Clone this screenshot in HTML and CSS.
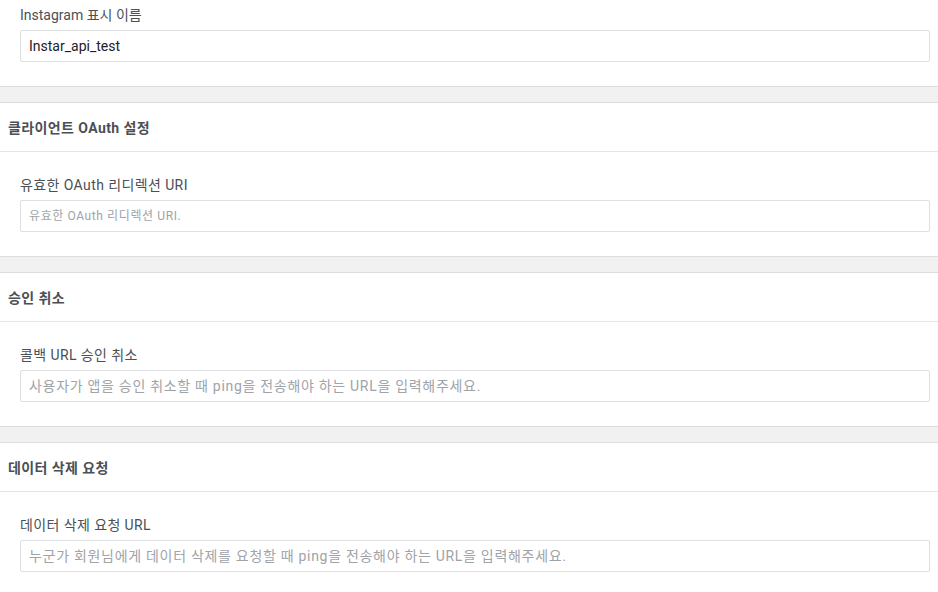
FILE: index.html
```html
<!DOCTYPE html>
<html lang="ko">
	<head>
		<meta charset="UTF-8" />
		<meta name="viewport" content="width=device-width, initial-scale=1.0" />
		<title>기본 설정</title>
		<link rel="stylesheet" href="styles.css">
	</head>
	<body>
		<div class="panel">
			<div class="field first">
				<label for="display-name">Instagram 표시 이름</label>
				<input id="display-name" class="text-input filled" type="text" value="Instar_api_test" />
			</div>
		</div>

		<div class="spacer"></div>

		<div class="panel">
			<h2 class="panel-title">클라이언트 OAuth 설정</h2>
			<div class="field">
				<label for="redirect-uri">유효한 OAuth 리디렉션 URI</label>
				<input id="redirect-uri" class="text-input small" type="text" placeholder="유효한 OAuth 리디렉션 URI." />
			</div>
		</div>

		<div class="spacer"></div>

		<div class="panel">
			<h2 class="panel-title">승인 취소</h2>
			<div class="field">
				<label for="deauth-url">콜백 URL 승인 취소</label>
				<input id="deauth-url" class="text-input" type="text" placeholder="사용자가 앱을 승인 취소할 때 ping을 전송해야 하는 URL을 입력해주세요." />
			</div>
		</div>

		<div class="spacer"></div>

		<div class="panel">
			<h2 class="panel-title">데이터 삭제 요청</h2>
			<div class="field">
				<label for="delete-url">데이터 삭제 요청 URL</label>
				<input id="delete-url" class="text-input" type="text" placeholder="누군가 회원님에게 데이터 삭제를 요청할 때 ping을 전송해야 하는 URL을 입력해주세요." />
			</div>
		</div>
	</body>
</html>
```

FILE: styles.css
```css
body {
	margin: 0;
	font-family: Roboto, "Noto Sans CJK KR", sans-serif;
	font-size: 14px;
	color: #4b4f56;
	background-color: #fff;
}

.panel {
	background-color: #fff;
}

.panel-title {
	margin: 0;
	height: 48px;
	padding: 0 8px;
	display: flex;
	align-items: center;
	font-size: 14px;
	font-weight: 700;
	letter-spacing: 0.4px;
	color: #4b4f56;
	border-bottom: 1px solid #e5e5e5;
}

.field {
	display: flex;
	flex-direction: column;
	padding: 24px 8px 24px 20px;
}

.field.first {
	padding-top: 6px;
}

.field label {
	height: 18px;
	line-height: 18px;
	margin-bottom: 6px;
	letter-spacing: 0.4px;
	color: #4b4f56;
}

.field.first label {
	letter-spacing: 0;
}

.text-input {
	box-sizing: border-box;
	height: 32px;
	padding: 0 8px;
	font-family: inherit;
	font-size: 14px;
	letter-spacing: 0.7px;
	color: #1d2129;
	border: 1px solid #dddfe2;
	border-radius: 2px;
	outline: none;
}

.text-input.filled {
	letter-spacing: 0;
}

.text-input::placeholder {
	color: #a0a3a8;
}

.text-input.small {
	font-size: 12px;
	letter-spacing: 0.6px;
}

.spacer {
	height: 15px;
	background-color: #f1f1f1;
	border-top: 1px solid #dddddd;
	border-bottom: 1px solid #dddddd;
}
```
